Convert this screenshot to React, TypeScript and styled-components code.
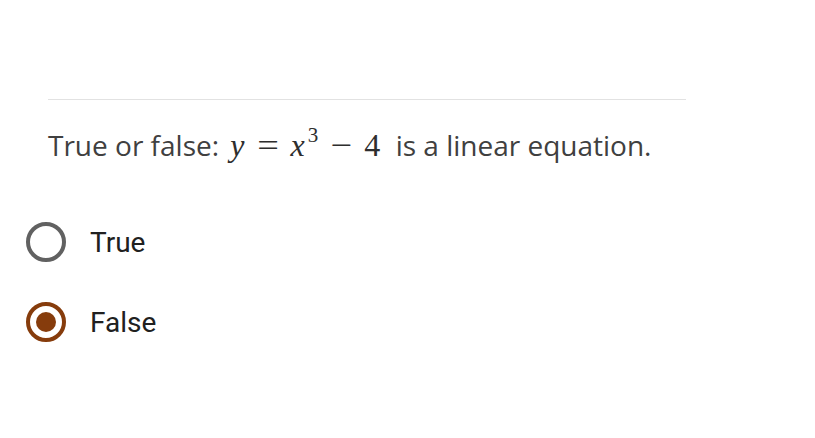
import React, { useState } from "react";
import styled, { createGlobalStyle } from "styled-components";

const GlobalStyle = createGlobalStyle`
  html, body {
    margin: 0;
    padding: 0;
    background: #ffffff;
  }
  body {
    font-family: "Open Sans", "Liberation Sans", sans-serif;
  }
`;

const options = [
  { id: "true", label: "True" },
  { id: "false", label: "False" },
];

const App = () => {
  const [selected, setSelected] = useState("false");

  return (
    <Page>
      <GlobalStyle />
      <Question>
        <Divider />
        <Prompt>
          True or false:{" "}
          <MathExpr>
            <Var>y</Var>
            <Op>=</Op>
            <Var>x</Var>
            <Sup>3</Sup>
            <Op>−</Op>
            <Num>4</Num>
          </MathExpr>{" "}
          is a linear equation.
        </Prompt>
      </Question>
      <Options>
        {options.map((option) => (
          <Option key={option.id} onClick={() => setSelected(option.id)}>
            <Radio checked={selected === option.id} />
            <Label>{option.label}</Label>
          </Option>
        ))}
      </Options>
    </Page>
  );
};

const Page = styled.div`
  width: 815px;
  height: 438px;
  box-sizing: border-box;
  padding-top: 99px;
`;

const Question = styled.div`
  padding-left: 48px;
  width: 638px;
`;

const Divider = styled.hr`
  margin: 0;
  border: none;
  border-top: 1.5px solid #e2e2e2;
`;

const Prompt = styled.p`
  margin: 25px 0 0;
  font-size: 28px;
  line-height: 40px;
  color: #404040;
  white-space: nowrap;
`;

const MathExpr = styled.span`
  font-family: "Liberation Serif", "DejaVu Serif", serif;
  font-size: 32px;
  color: #2e2e2e;
  margin-left: 4px;
  margin-right: 8px;
`;

const Var = styled.span`
  font-style: italic;
`;

const Num = styled.span``;

const Op = styled.span`
  display: inline-block;
  margin: 0 14px;
  transform: scaleX(1.2);
`;

const Sup = styled.sup`
  font-size: 21px;
  vertical-align: 14px;
  line-height: 0;
  margin-left: 3px;
`;

const Options = styled.div`
  display: flex;
  flex-direction: column;
  gap: 40px;
  margin-top: 57px;
  padding-left: 26px;
`;

const Option = styled.label`
  display: flex;
  align-items: center;
  gap: 24px;
  cursor: pointer;
`;

const Radio = styled.span<{ checked: boolean }>`
  box-sizing: border-box;
  width: 40px;
  height: 40px;
  border-radius: 50%;
  border: 4px solid ${(p) => (p.checked ? "#863c0c" : "#616161")};
  display: flex;
  align-items: center;
  justify-content: center;
  &::after {
    content: "";
    width: 20px;
    height: 20px;
    border-radius: 50%;
    background: #863c0c;
    display: ${(p) => (p.checked ? "block" : "none")};
  }
`;

const Label = styled.span`
  font-family: Roboto, "Liberation Sans", sans-serif;
  font-size: 28px;
  color: #202020;
`;

export default App;
